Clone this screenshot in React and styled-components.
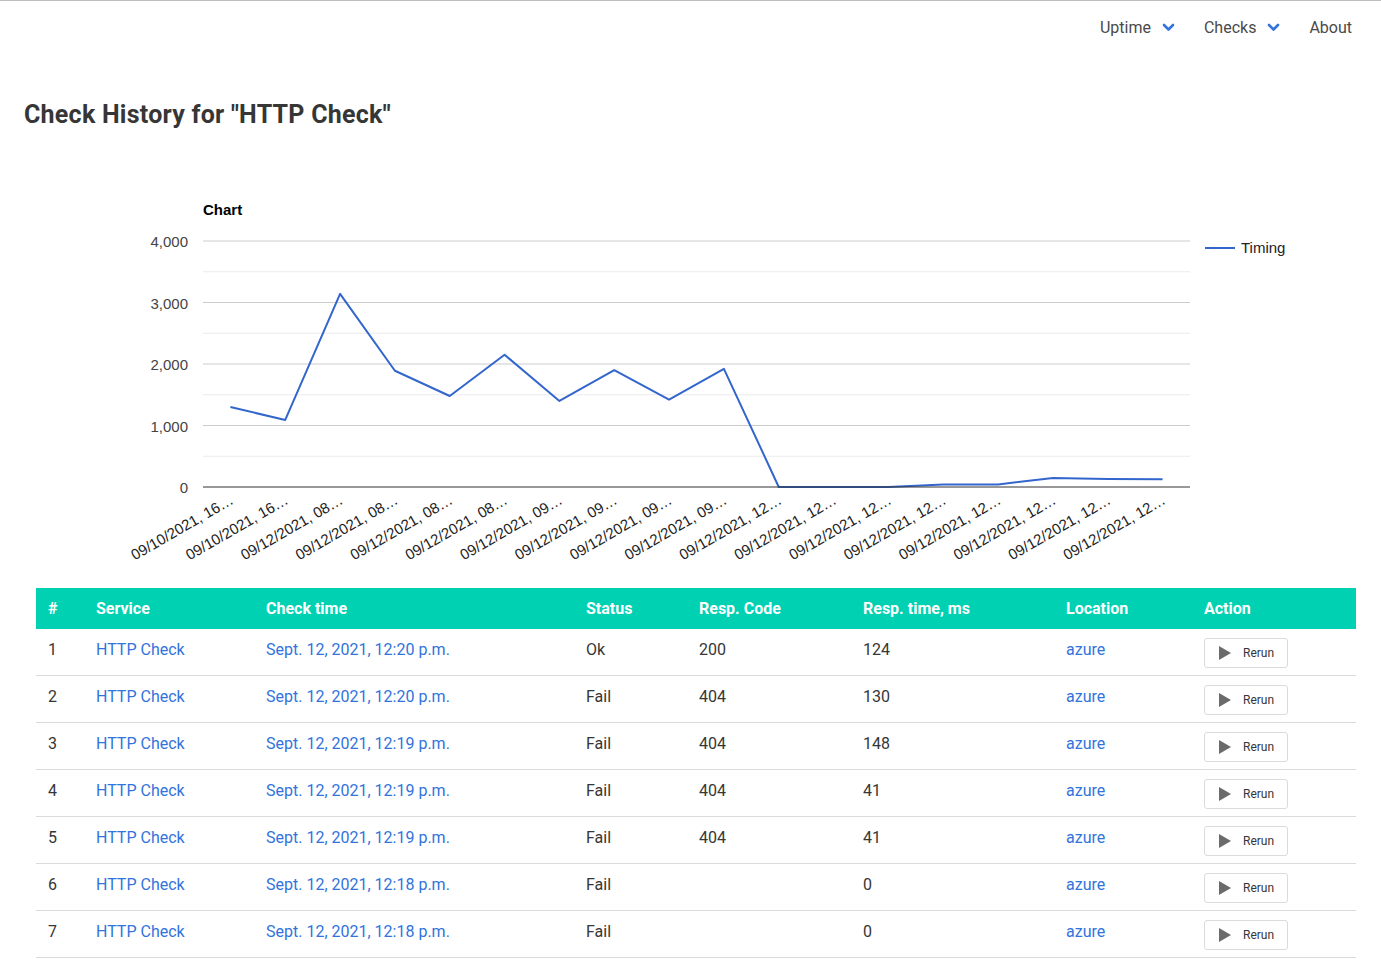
import React from 'react';
import styled, { createGlobalStyle } from 'styled-components';

const GlobalStyle = createGlobalStyle`
	html, body {
		margin: 0;
		padding: 0;
		background: #fff;
	}

	body {
		border-top: 1px solid #bdbdbd;
		font-family: Roboto, "Noto Sans", sans-serif;
		font-size: 16px;
		color: #4a4a4a;
	}
`;

const timings = [1300, 1090, 3140, 1890, 1480, 2150, 1400, 1900, 1420, 1920, 0, 0, 0, 41, 41, 148, 130, 124];
const labels = [
	'16', '16', '08', '08', '08', '08', '09', '09', '09', '09',
	'12', '12', '12', '12', '12', '12', '12', '12',
];

const checks = [
	{ id: 1, time: 'Sept. 12, 2021, 12:20 p.m.', status: 'Ok', code: '200', ms: '124' },
	{ id: 2, time: 'Sept. 12, 2021, 12:20 p.m.', status: 'Fail', code: '404', ms: '130' },
	{ id: 3, time: 'Sept. 12, 2021, 12:19 p.m.', status: 'Fail', code: '404', ms: '148' },
	{ id: 4, time: 'Sept. 12, 2021, 12:19 p.m.', status: 'Fail', code: '404', ms: '41' },
	{ id: 5, time: 'Sept. 12, 2021, 12:19 p.m.', status: 'Fail', code: '404', ms: '41' },
	{ id: 6, time: 'Sept. 12, 2021, 12:18 p.m.', status: 'Fail', code: '', ms: '0' },
	{ id: 7, time: 'Sept. 12, 2021, 12:18 p.m.', status: 'Fail', code: '', ms: '0' },
];

const columns = [
	{ title: '#', width: 48 },
	{ title: 'Service', width: 170 },
	{ title: 'Check time', width: 320 },
	{ title: 'Status', width: 113 },
	{ title: 'Resp. Code', width: 164 },
	{ title: 'Resp. time, ms', width: 203 },
	{ title: 'Location', width: 138 },
	{ title: 'Action', width: 164 },
];

const Navbar = styled.nav`
	display: flex;
	justify-content: flex-end;
	align-items: center;
	gap: 29px;
	height: 52px;
	padding-right: 29px;
`;

const NavItem = styled.a`
	display: flex;
	align-items: center;
	gap: 11px;
	color: #4a4a4a;
	font-size: 16px;
	text-decoration: none;
	cursor: pointer;
`;

const Section = styled.section`
	padding: 48px 13px 0 24px;
`;

const Title = styled.h1`
	margin: 0 0 23px;
	font-size: 25px;
	font-weight: 700;
	letter-spacing: 0.25px;
	line-height: 1.125;
	color: #363636;
`;

const ChartBox = styled.div`
	height: 436px;

	& text {
		font-family: "Liberation Sans", Arial, sans-serif;
		font-size: 15px;
	}
`;

const TableWrap = styled.div`
	margin: 0 12px;
`;

const Table = styled.table`
	width: 100%;
	border-collapse: collapse;
	table-layout: fixed;
`;

const Th = styled.th`
	box-sizing: border-box;
	width: ${({ $w }) => $w}px;
	padding: 9px 12px 8px;
	background: #00d1b2;
	color: #fff;
	font-weight: 700;
	text-align: left;
	line-height: 24px;
`;

const Td = styled.td`
	padding: 9px 12px 7px;
	border-bottom: 1px solid #dbdbdb;
	vertical-align: top;
	line-height: 24px;
	color: #363636;
`;

const Link = styled.a`
	color: #3273dc;
	text-decoration: none;
	cursor: pointer;
`;

const Button = styled.button`
	display: inline-flex;
	align-items: center;
	gap: 12px;
	height: 30px;
	padding: 0 13px 0 14px;
	border: 1px solid #dbdbdb;
	border-radius: 3px;
	background: #fff;
	color: #363636;
	font-family: Roboto, "Noto Sans", sans-serif;
	font-size: 12px;
	cursor: pointer;
`;

const Chevron = () => (
	<svg width="13" height="9" viewBox="0 0 13 9">
		<path d="M2 2l4.5 4.5L11 2" fill="none" stroke="#3273dc" strokeWidth="2.6" strokeLinecap="round" strokeLinejoin="round" />
	</svg>
);

const Play = () => (
	<svg width="12" height="14" viewBox="0 0 12 14">
		<path d="M0 0L12 7L0 14Z" fill="#6b6b6b" />
	</svg>
);

const Chart = () => {
	const left = 179;
	const right = 1166;
	const top = 89;
	const bottom = 335;
	const step = (right - left) / timings.length;
	const yOf = (v) => bottom - (v / 4000) * (bottom - top);
	const points = timings.map((v, i) => `${left + step * (i + 0.5)},${yOf(v)}`).join(' ');

	return (
		<svg width="1345" height="436">
			<text x={left} y={63} fontWeight="700" fill="#000">Chart</text>
			{[500, 1500, 2500, 3500].map((v) => (
				<line key={v} x1={left} x2={right} y1={yOf(v)} y2={yOf(v)} stroke="#ebebeb" />
			))}
			{[1000, 2000, 3000, 4000].map((v) => (
				<line key={v} x1={left} x2={right} y1={yOf(v)} y2={yOf(v)} stroke="#cccccc" />
			))}
			{[0, 1000, 2000, 3000, 4000].map((v) => (
				<text key={v} x={164} y={yOf(v) + 6} textAnchor="end" fill="#444">
					{v.toLocaleString('en-US')}
				</text>
			))}
			<polyline points={points} fill="none" stroke="#3366cc" strokeWidth="2" strokeLinejoin="round" />
			<line x1={left} x2={right} y1={bottom} y2={bottom} stroke="#333" />
			{labels.map((h, i) => {
				const x = left + step * (i + 0.5) + 4;
				const y = 351;
				const day = i < 2 ? '10' : '12';
				return (
					<text key={i} x={x} y={y} textAnchor="end" fill="#222" transform={`rotate(-30 ${x} ${y})`}>
						{`09/${day}/2021, ${h}…`}
					</text>
				);
			})}
			<line x1={1181} x2={1211} y1={96} y2={96} stroke="#3366cc" strokeWidth="2" />
			<text x={1217} y={101} fill="#222">Timing</text>
		</svg>
	);
};

export default function App() {
	return (
		<>
			<GlobalStyle />
			<Navbar>
				<NavItem>Uptime <Chevron /></NavItem>
				<NavItem>Checks <Chevron /></NavItem>
				<NavItem>About</NavItem>
			</Navbar>
			<Section>
				<Title>Check History for "HTTP Check"</Title>
				<ChartBox>
					<Chart />
				</ChartBox>
				<TableWrap>
					<Table>
						<thead>
							<tr>
								{columns.map(({ title, width }) => (
									<Th key={title} $w={width}>{title}</Th>
								))}
							</tr>
						</thead>
						<tbody>
							{checks.map(({ id, time, status, code, ms }) => (
								<tr key={id}>
									<Td>{id}</Td>
									<Td><Link>HTTP Check</Link></Td>
									<Td><Link>{time}</Link></Td>
									<Td>{status}</Td>
									<Td>{code}</Td>
									<Td>{ms}</Td>
									<Td><Link>azure</Link></Td>
									<Td>
										<Button><Play />Rerun</Button>
									</Td>
								</tr>
							))}
						</tbody>
					</Table>
				</TableWrap>
			</Section>
		</>
	);
}
